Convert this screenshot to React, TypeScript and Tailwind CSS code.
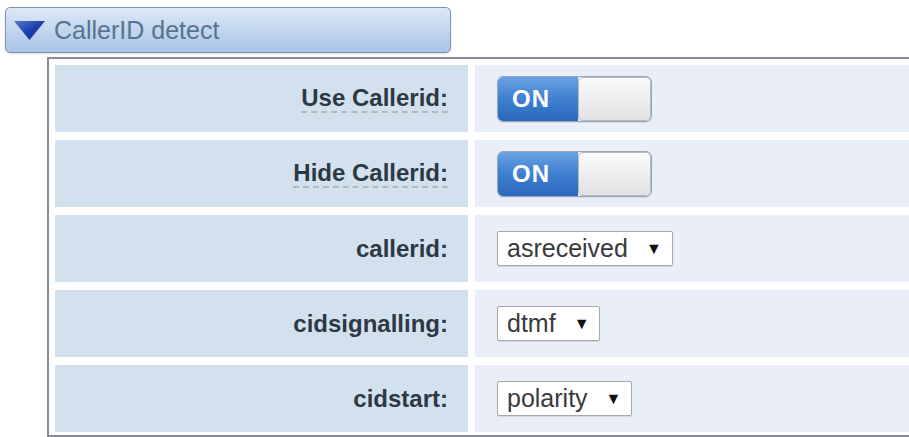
import React from "react";

const font = { fontFamily: '"Liberation Sans", Arial, sans-serif' };

function Toggle() {
  return (
    <div className="flex h-[46px] w-[155px] rounded-[6px] border border-[#9aa6b8] overflow-hidden shadow-[0_1px_1px_rgba(0,0,0,0.08)]">
      <div className="flex w-[80px] items-center bg-gradient-to-b from-[#6aa1e2] via-[#3f7fd0] to-[#2c68bb] pl-[14px] text-[24px] font-bold tracking-[1px] text-white">
        ON
      </div>
      <div className="flex-1 rounded-[5px] border border-[#b5b9c0] bg-gradient-to-b from-[#fbfbfb] to-[#e2e2e2]" />
    </div>
  );
}

function Select({ value }: { value: string }) {
  return (
    <div className="flex h-[35px] items-center gap-[18px] rounded-[2px] border border-[#a7a7a7] bg-white pl-[9px] pr-[10px] shadow-[0_1px_1px_rgba(0,0,0,0.1)]">
      <span className="text-[25px] leading-none text-[#3a3a3a]">{value}</span>
      <span className="text-[16px] leading-none text-[#111]">▼</span>
    </div>
  );
}

function Row({ label, dashed, children }: { label: string; dashed?: boolean; children: React.ReactNode }) {
  return (
    <>
      <div className="flex h-[67px] items-center justify-end bg-[#d3e1ee] pr-[20px]">
        <span
          className={
            "text-[24px] font-bold leading-[27px] text-[#2c3844] " +
            (dashed ? "border-b-2 border-dashed border-[#b0b8c0]" : "")
          }
        >
          {label}
        </span>
      </div>
      <div className="flex h-[67px] items-center bg-[#e9eef7] pl-[22px]">{children}</div>
    </>
  );
}

export default function App() {
  return (
    <div className="h-[437px] w-[909px] overflow-hidden bg-white" style={font}>
      <div className="pl-[5px] pt-[7px]">
        <div className="flex h-[46px] w-[446px] items-center gap-[8px] rounded-[5px] border border-[#8193aa] bg-gradient-to-b from-[#dde8f6] via-[#c3d6f0] to-[#a9c3e7] pl-[7px] shadow-[0_1px_2px_rgba(0,0,0,0.15)]">
          <svg width="33" height="21" viewBox="0 0 33 21">
            <defs>
              <linearGradient id="tri" x1="0" y1="0" x2="1" y2="1">
                <stop offset="0" stopColor="#5d7cc4" />
                <stop offset="0.5" stopColor="#1d3fae" />
                <stop offset="1" stopColor="#142f86" />
              </linearGradient>
            </defs>
            <polygon points="1,1 32,1 16.5,20" fill="url(#tri)" />
          </svg>
          <span className="text-[25px] leading-none text-[#56748f]">CallerID detect</span>
        </div>
      </div>
      <div className="ml-[47px] mt-[4px] w-[900px] border-2 border-[#868c95] bg-white pb-[3px] pl-[6px] pt-[6px]">
        <div className="grid grid-cols-[413px_1fr] gap-x-[7px] gap-y-[8px]">
          <Row label="Use Callerid:" dashed>
            <Toggle />
          </Row>
          <Row label="Hide Callerid:" dashed>
            <Toggle />
          </Row>
          <Row label="callerid:">
            <Select value="asreceived" />
          </Row>
          <Row label="cidsignalling:">
            <Select value="dtmf" />
          </Row>
          <Row label="cidstart:">
            <Select value="polarity" />
          </Row>
        </div>
      </div>
    </div>
  );
}
